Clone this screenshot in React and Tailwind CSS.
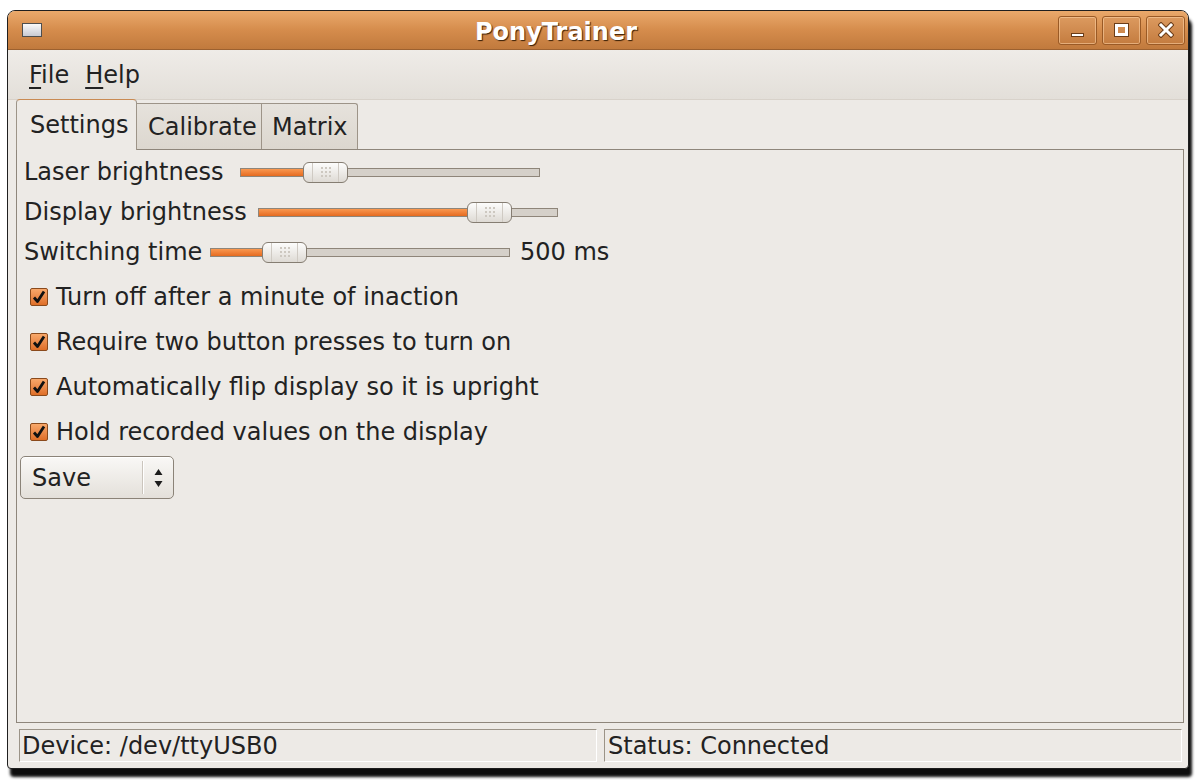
import React from 'react'

const font = { fontFamily: '"DejaVu Sans", "Liberation Sans", sans-serif' }

function TitleButton({ children }) {
  return (
    <div className="flex h-[29px] w-[39px] items-center justify-center rounded-[3px] border border-[#9a5a26] bg-gradient-to-b from-[#dc9a5f] to-[#c47c3f] shadow-[inset_0_0_0_1px_rgba(255,214,170,0.55)]">
      {children}
    </div>
  )
}

function Thumb({ left }) {
  return (
    <div
      className="absolute top-0 flex h-[21px] w-[45px] items-center rounded-[6px] border border-[#857d72] bg-gradient-to-b from-[#fdfdfc] to-[#dedad4]"
      style={{ left }}
    >
      <div className="ml-[8px] h-full w-px bg-[#cfcac3]" />
      <div className="flex flex-1 items-center justify-center">
        <div className="grid grid-cols-3 gap-[2px]">
          {Array.from({ length: 9 }).map((_, i) => (
            <div key={i} className="h-[2px] w-[2px] bg-[#cdc8c0]" />
          ))}
        </div>
      </div>
      <div className="mr-[8px] h-full w-px bg-[#cfcac3]" />
    </div>
  )
}

function Slider({ thumb }) {
  return (
    <div className="relative flex h-[21px] w-[300px] items-center">
      <div className="flex h-[9px] w-full overflow-hidden border border-[#8e8579] bg-[#d5d0c9]">
        <div
          className="h-full border-r border-[#b0541a] bg-gradient-to-b from-[#f9984f] to-[#e56b1e]"
          style={{ width: thumb + 4 }}
        />
      </div>
      <Thumb left={thumb} />
    </div>
  )
}

function SliderRow({ label, width, thumb, suffix }) {
  return (
    <div className="flex h-[40px] items-center">
      <span className="shrink-0 whitespace-nowrap" style={{ width }}>
        {label}
      </span>
      <Slider thumb={thumb} />
      {suffix && <span className="ml-[10px]">{suffix}</span>}
    </div>
  )
}

function CheckRow({ label }) {
  return (
    <div className="flex h-[45px] items-center gap-[8px] pl-[13px]">
      <div className="flex h-[18px] w-[18px] items-center justify-center rounded-[2px] border border-[#8a4a1c] bg-gradient-to-b from-[#f8a86a] to-[#df6f27]">
        <svg width="14" height="14" viewBox="0 0 14 14">
          <path d="M2 7.5 L5.5 11.5 L12 1.5" fill="none" stroke="#111" strokeWidth="2.8" strokeLinejoin="round" />
        </svg>
      </div>
      <span>{label}</span>
    </div>
  )
}

export default function App() {
  return (
    <div className="min-h-screen bg-white pl-[7px] pt-[10px] text-[24px] leading-none text-[#222]" style={font}>
      <div className="flex h-[759px] w-[1182px] flex-col overflow-hidden rounded-t-[8px] rounded-b-[4px] border border-[#1f1f1f] bg-[#edeae6] shadow-[3px_8px_3px_rgba(0,0,0,0.95)]">
        {/* title bar */}
        <div className="flex h-[39px] items-center border-b border-[#9c6130] bg-gradient-to-b from-[#eaa96b] via-[#d58c4c] to-[#c17a3d]">
          <div className="w-[46px] pl-[14px]">
            <div className="h-[14px] w-[20px] border border-[#4e4e4e] bg-gradient-to-b from-[#fafafa] to-[#c9cad2]" />
          </div>
          <div className="flex-1 pt-[4px] text-center font-bold text-white [text-shadow:1px_1px_1px_rgba(40,20,0,0.9)]">
            PonyTrainer
          </div>
          <div className="flex gap-[5px] pr-[3px]">
            <TitleButton>
              <div className="mt-[10px] h-[4px] w-[13px] border border-[#6b3c17] bg-white" />
            </TitleButton>
            <TitleButton>
              <div className="h-[12px] w-[13px] border-[3px] border-white outline outline-1 outline-[#6b3c17]" />
            </TitleButton>
            <TitleButton>
              <svg width="16" height="16" viewBox="0 0 16 16">
                <path d="M3 3 L13 13 M13 3 L3 13" stroke="#6b3c17" strokeWidth="5" strokeLinecap="square" />
                <path d="M3 3 L13 13 M13 3 L3 13" stroke="#fff" strokeWidth="3" strokeLinecap="square" />
              </svg>
            </TitleButton>
          </div>
        </div>

        {/* menu bar */}
        <div className="flex h-[50px] items-center gap-[16px] border-b border-[#d8d2ca] bg-gradient-to-b from-[#efece8] to-[#e3dfd9] pl-[21px]">
          <span>
            <span className="underline underline-offset-[4px]">F</span>ile
          </span>
          <span>
            <span className="underline underline-offset-[4px]">H</span>elp
          </span>
        </div>

        <div className="flex flex-1 flex-col pl-[8px] pr-[4px]">
          {/* tabs */}
          <div className="flex h-[49px] items-end">
            <div className="relative z-10 -mb-px flex h-[51px] w-[121px] items-center rounded-t-[4px] border-x border-t border-[#9d9488] border-t-[#c98a52] bg-[#edeae6] pl-[13px]">
              Settings
            </div>
            <div className="flex h-[46px] w-[125px] items-center border-r border-t border-[#9d9488] bg-gradient-to-b from-[#e6e2dc] to-[#dcd7cf] pl-[11px]">
              Calibrate
            </div>
            <div className="flex h-[46px] w-[96px] items-center rounded-tr-[3px] border-r border-t border-[#9d9488] bg-gradient-to-b from-[#e6e2dc] to-[#dcd7cf] pl-[10px]">
              Matrix
            </div>
          </div>

          {/* notebook page */}
          <div className="flex h-[574px] flex-col border border-[#8e867b] pt-[2px]">
            <div className="flex flex-col pl-[7px]">
              <SliderRow label="Laser brightness" width={216} thumb={63} />
              <SliderRow label="Display brightness" width={234} thumb={209} />
              <SliderRow label="Switching time" width={186} thumb={52} suffix="500 ms" />
            </div>
            <div className="mt-[2px] flex flex-col">
              <CheckRow label="Turn off after a minute of inaction" />
              <CheckRow label="Require two button presses to turn on" />
              <CheckRow label="Automatically flip display so it is upright" />
              <CheckRow label="Hold recorded values on the display" />
            </div>
            <div className="mt-[2px] pl-[3px]">
              <div className="flex h-[43px] w-[154px] items-center rounded-[5px] border border-[#8b8378] bg-gradient-to-b from-[#f9f8f6] to-[#e4e0da] shadow-[inset_0_1px_0_#fff]">
                <span className="flex-1 pl-[11px]">Save</span>
                <div className="h-[33px] w-[2px] border-l border-[#cbc5bd] bg-white" />
                <div className="flex w-[29px] justify-center">
                  <svg width="9" height="20" viewBox="0 0 9 20">
                    <path d="M4.5 1 L8.5 7 L0.5 7 Z M4.5 19 L8.5 13 L0.5 13 Z" fill="#1c1c1c" />
                  </svg>
                </div>
              </div>
            </div>
          </div>

          {/* status bar */}
          <div className="flex h-[44px] gap-[7px] pl-[3px] pt-[6px]">
            <div className="flex h-[33px] w-[578px] items-center border border-b-white border-l-[#9b9387] border-r-white border-t-[#9b9387] pl-[2px]">
              Device: /dev/ttyUSB0
            </div>
            <div className="flex h-[33px] w-[578px] items-center border border-b-white border-l-[#9b9387] border-r-white border-t-[#9b9387] pl-[3px]">
              Status: Connected
            </div>
          </div>
        </div>
      </div>
    </div>
  )
}
